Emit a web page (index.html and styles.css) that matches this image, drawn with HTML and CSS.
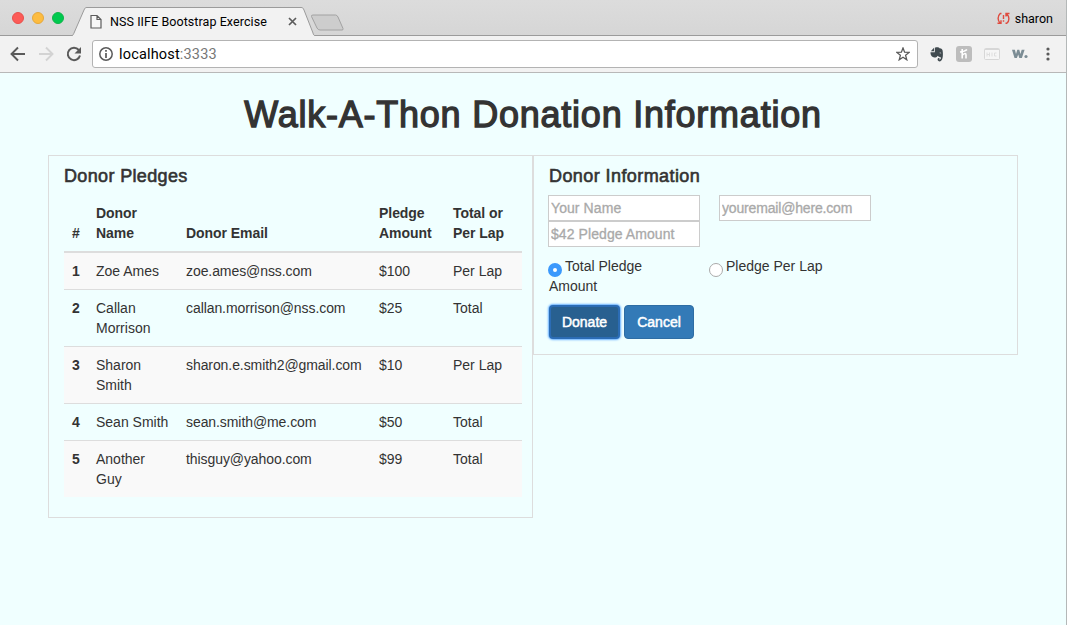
FILE: index.html
```html
<!DOCTYPE html>
<html lang="en">
<head>
<meta charset="utf-8">
<title>NSS IIFE Bootstrap Exercise</title>
<link rel="stylesheet" href="styles.css">
</head>
<body>
<div class="window">
  <header class="tabstrip">
    <div class="lights"><i class="light red"></i><i class="light amber"></i><i class="light green"></i></div>
    <div class="tab">
      <svg class="tab-shape" width="243" height="30" viewBox="0 0 243 30"><path d="M0 29.500L2 26 12 3Q13 .5 15 .5H229Q231 .5 232 3L241 26 243 29.500V30H0Z" fill="#f2f2f2"/><path d="M0 28.500 C1 28.500 1.500 27 2 26 L12 3 C13 .7 13.500 .5 15 .5 H229 C230.500 .5 231 .7 232 3 L241 26 C241.500 28 242 28.500 243 28.500" fill="none" stroke="#9b9b9b"/></svg>
      <div class="tab-content">
        <svg width="12" height="15" viewBox="0 0 12 15"><path d="M1 1.500h6l4 4v8.500H1zM7 1.500v4h4" fill="#f7f7f7" stroke="#5c5c5c" stroke-width="1.200"/></svg>
        <span class="tab-title">NSS IIFE Bootstrap Exercise</span>
        <svg class="tab-close" width="9" height="9" viewBox="0 0 9 9"><path d="M1 1l7 7M8 1l-7 7" stroke="#5c5c5c" stroke-width="1.700"/></svg>
      </div>
    </div>
    <svg class="newtab" width="35" height="18" viewBox="0 0 35 18"><path d="M3 1H25.500Q27 1 28 3L33 14.500Q33.500 16 32 16H10Q8 16 7 14L1.500 2.500Q1 1 3 1Z" fill="#cdcdcd" stroke="#a2a2a2"/></svg>
    <div class="profile">
      <svg width="13" height="13" viewBox="0 0 13 13" fill="none" stroke="#df4b3f" stroke-width="1.400"><path d="M4.500 1.500H3.200C.4 4 .4 8.500 3.200 11M.5 11.300h3.500V8.300M8.500 11.300H9.800C12.600 9 12.600 4.500 9.800 2M12.500 1.500H9V4.500M6.500 3v4M6.500 8.300v1.500"/></svg>
      <span>sharon</span>
    </div>
  </header>
  <nav class="toolbar">
    <svg width="16" height="16" viewBox="0 0 16 16" fill="none" stroke="#5a5a5a" stroke-width="1.900"><path d="M15 8H2M8 1.500L1.500 8 8 14.500"/></svg>
    <svg class="forward" width="16" height="16" viewBox="0 0 16 16" fill="none" stroke="#d3d3d3" stroke-width="1.900"><path d="M1 8h13M8 1.500L14.500 8 8 14.500"/></svg>
    <svg class="reload" width="16" height="16" viewBox="0 0 16 16"><path d="M12.800 4A6.200 6.200 0 1 0 14 9.500" fill="none" stroke="#5a5a5a" stroke-width="2"/><path d="M15 1v6.500H8.500z" fill="#5a5a5a"/></svg>
    <div class="address">
      <svg width="14" height="14" viewBox="0 0 14 14"><circle cx="7" cy="7" r="6.200" fill="none" stroke="#5a5a5a" stroke-width="1.500"/><path d="M7 3v1.700M7 6v5" stroke="#5a5a5a" stroke-width="1.700"/></svg>
      <span class="url">localhost<span class="port">:3333</span></span>
      <svg class="star" width="14" height="14" viewBox="0 0 14 14"><path d="M7 1l1.600 4.200 4.600.2-3.600 2.900 1.200 4.500L7 10.300l-3.800 2.500 1.200-4.500L.8 5.400l4.600-.2z" fill="none" stroke="#5a5a5a" stroke-width="1.300"/></svg>
    </div>
    <div class="extensions">
      <svg width="14" height="15" viewBox="0 0 14 15"><path d="M4 .8L.8 4.300H4zM4.800.8C7 0 9 .3 9.500 1.300 12 1.300 12.600 2.500 12.800 5 13.200 9 12.700 14 9.900 14.500 7 14.500 6.700 10.800 9.500 10.800L9.300 12.500C10.700 12.700 11.200 11.500 10.700 10.300 9 9.800 8 9.500 7.500 8.800 7 10.800 5.500 10.600 3.500 10.200 1 9.500.5 7.500.5 5.200H4.800Z" fill="#414b50"/><path d="M9.300 6q1.200-1.200 2 .5z" fill="#f2f2f2"/></svg>
      <svg width="16" height="16" viewBox="0 0 16 16"><rect width="16" height="16" rx="3" fill="#bdbdbd"/><path d="M6.200 3V12.500M4 6Q9 5.500 11 3.500M6.500 9Q10 6 10 9V12.500" fill="none" stroke="#fff" stroke-width="1.600"/></svg>
      <svg width="16" height="12" viewBox="0 0 16 12"><rect x=".5" y=".5" width="15" height="11" rx="1" fill="#f6f6f6" stroke="#d7d7d7"/><path d="M1 1.500h14" stroke="#d7d7d7"/><path d="M3 4.500v4M3 6.500h2M5.500 4.500v4M8 4.500v4M12.500 5h-2v3h2" fill="none" stroke="#dedede"/></svg>
      <svg width="16" height="11" viewBox="0 0 16 11"><path d="M0 .8H2.900L4 5 5.300.8H7.300L8.400 5 9.700.8H12.600L9.900 9H7.300L6.200 5.500 4.900 9H2.500Z" fill="#7c8d95"/><circle cx="14" cy="7.500" r="1.600" fill="#7c8d95"/></svg>
      <svg class="menu" width="4" height="14" viewBox="0 0 4 14" fill="#5a5a5a"><circle cx="2" cy="2" r="1.600"/><circle cx="2" cy="7" r="1.600"/><circle cx="2" cy="12" r="1.600"/></svg>
    </div>
  </nav>
  <main class="page">
    <h1>Walk-A-Thon Donation Information</h1>
    <div class="row">
      <section class="panel pledges">
        <h4>Donor Pledges</h4>
        <table class="table">
          <colgroup><col class="c-num"><col class="c-name"><col class="c-email"><col class="c-amount"><col class="c-type"></colgroup>
          <thead><tr><th>#</th><th>Donor<br>Name</th><th>Donor Email</th><th>Pledge<br>Amount</th><th>Total or<br>Per Lap</th></tr></thead>
          <tbody>
            <tr><th>1</th><td>Zoe Ames</td><td class="email">zoe.ames@nss.com</td><td>$100</td><td>Per Lap</td></tr>
            <tr><th>2</th><td>Callan<br>Morrison</td><td class="email">callan.morrison@nss.com</td><td>$25</td><td>Total</td></tr>
            <tr><th>3</th><td>Sharon<br>Smith</td><td class="email">sharon.e.smith2@gmail.com</td><td>$10</td><td>Per Lap</td></tr>
            <tr><th>4</th><td>Sean Smith</td><td class="email">sean.smith@me.com</td><td>$50</td><td>Total</td></tr>
            <tr><th>5</th><td>Another<br>Guy</td><td class="email">thisguy@yahoo.com</td><td>$99</td><td>Total</td></tr>
          </tbody>
        </table>
      </section>
      <section class="panel info">
        <h4>Donor Information</h4>
        <div class="fields">
          <input type="text" placeholder="Your Name">
          <input class="mail" type="text" placeholder="youremail@here.com">
          <input type="text" placeholder="$42 Pledge Amount">
        </div>
        <div class="choices">
          <label><i class="radio on"></i>Total Pledge<br><span class="second">Amount</span></label>
          <label><i class="radio"></i>Pledge Per Lap</label>
        </div>
        <div class="buttons">
          <button class="btn focused">Donate</button>
          <button class="btn">Cancel</button>
        </div>
      </section>
    </div>
  </main>
</div>
</body>
</html>
```
FILE: styles.css
```css
* { box-sizing: border-box; }
body { margin: 0; background: #f0ffff; color: #333; font: 14px/20px "Liberation Sans", Arial, sans-serif; }
svg { display: block; flex: none; }
.window { width: 1067px; height: 625px; overflow: hidden; border-right: 1px solid #b4b8b8; }

.tabstrip { height: 36px; display: flex; background: linear-gradient(#dcdcdc, #d6d6d6); border-bottom: 1px solid #9b9b9b; font-family: Roboto, sans-serif; color: #000; }
.lights { display: flex; gap: 8px; padding: 12px 0 0 12px; width: 72px; flex: none; }
.light { width: 12px; height: 12px; border-radius: 50%; }
.red { background: #fc5b57; border: 1px solid #e8504c; }
.amber { background: #fdbc40; border: 1px solid #e5a83c; }
.green { background: #00c94f; border: 1px solid #10b549; }
.tab { display: grid; margin-top: 7px; width: 243px; height: 29px; }
.tab-shape, .tab-content { grid-area: 1 / 1; }
.tab-content { display: flex; align-items: center; height: 29px; padding-left: 18px; font-size: 12.500px; z-index: 1; }
.tab-title { width: 158px; margin-left: 8px; white-space: nowrap; letter-spacing: .07px; }
.tab-close { margin-left: 20px; }
.newtab { margin: 14px 0 0 -5px; }
.profile { display: flex; align-items: center; gap: 5px; margin-left: auto; padding: 2px 13px 0 0; font-size: 12.500px; }

.toolbar { height: 37px; display: flex; align-items: center; padding-left: 10px; background: #f2f2f2; border-bottom: 1px solid #b8b8b8; }
.forward { margin-left: 12px; }
.reload { margin-left: 12px; }
.address { display: flex; align-items: center; width: 826px; height: 28px; margin-left: 10px; padding: 0 7px 0 6px; background: #fff; border: 1px solid #b3b3b3; border-radius: 3px; font: 14.500px/20px Roboto, sans-serif; color: #000; }
.url { margin-left: 6px; padding-top: 2px; letter-spacing: .17px; }
.port { color: #777; }
.star { margin-left: auto; }
.extensions { display: flex; align-items: center; gap: 12px; margin-left: 12px; }
.menu { margin-left: 6px; }

.page { padding: 0 48px; }
h1, h4 { margin: 0; font-weight: 400; -webkit-text-stroke: .5px #333; white-space: nowrap; }
h1 { padding-top: 22px; height: 82px; font-size: 36px; line-height: 40px; text-align: center; -webkit-text-stroke-width: 1.300px; letter-spacing: .77px; }
h4 { font-size: 18px; line-height: 20px; letter-spacing: .35px; -webkit-text-stroke-width: .6px; }
.row { display: flex; align-items: flex-start; }
.panel { width: 485px; border: 1px solid #ddd; padding: 10px 10px 0 15px; }
.pledges { height: 363px; }
.info { height: 200px; padding-left: 14px; }
.info h4 { padding-left: 1px; letter-spacing: .42px; }

.table { width: 458px; margin-top: 9px; table-layout: fixed; border-collapse: collapse; }
.c-num { width: 24px; }
.c-name { width: 90px; }
.c-email { width: 193px; }
.c-amount { width: 74px; }
.c-type { width: 77px; }
th, td { padding: 8px 0 8px 8px; text-align: left; vertical-align: top; white-space: nowrap; border-top: 1px solid #ddd; }
thead th { vertical-align: bottom; border-top: 0; border-bottom: 2px solid #ddd; letter-spacing: -.05px; }
tbody tr:nth-child(odd) { background: #f9f9f9; }
.email { letter-spacing: -.08px; }

.fields { display: grid; grid-template-columns: 152px 152px; column-gap: 19px; margin-top: 9px; }
input { width: 152px; height: 26px; margin: 0; padding: 1px 2px; border: 1px solid #ccc; background: #fff; font: inherit; }
input::placeholder { color: #a9a9a9; opacity: 1; -webkit-text-stroke: .3px #a9a9a9; letter-spacing: .08px; }
.mail::placeholder { letter-spacing: -.17px; }
.choices { display: grid; grid-template-columns: 161px 161px; margin-top: 9px; }
.radio { display: inline-block; width: 14px; height: 14px; margin: 0 3px -1px 0; vertical-align: -5px; border: 1px solid #aaa; border-radius: 50%; background: #fff; }
.choices label { height: 40px; line-height: 20px; }
.radio.on { border: 5px solid #3b99fc; }
.second { padding-left: 1px; }
.buttons { display: flex; gap: 4px; margin-top: 9px; }
.btn { height: 34px; width: 70px; padding: 0; border: 1px solid #2e6da4; border-radius: 4px; background: #337ab7; color: #fff; font: inherit; -webkit-text-stroke: .5px #fff; }
.btn.focused { width: 71px; margin-left: 1px; background: #286090; border: 2px solid #2b6cb5; box-shadow: 0 0 2px 1px #66afff; }
```
